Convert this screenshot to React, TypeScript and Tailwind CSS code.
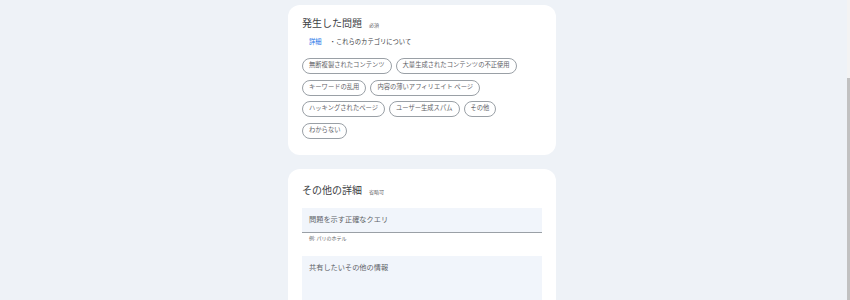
import React from "react";

const chipsRows: string[][] = [
  ["無断複製されたコンテンツ", "大量生成されたコンテンツの不正使用"],
  ["キーワードの乱用", "内容の薄いアフィリエイト ページ"],
  ["ハッキングされたページ", "ユーザー生成スパム", "その他"],
  ["わからない"],
];

export default function App() {
  return (
    <div
      className="relative w-[850px] h-[300px] overflow-hidden bg-[#eef2f7]"
      style={{ fontFamily: '"Roboto", "Noto Sans CJK JP", sans-serif' }}
    >
      <div className="w-[844px] flex flex-col items-center pt-[5px] gap-[14px]">
        <div className="w-[268px] h-[150px] bg-white rounded-[12px] px-[14px] pt-[11px]">
          <div className="flex items-baseline gap-[7px] h-[15px]">
            <span className="text-[10px] text-[#3c4043] leading-[15px]">発生した問題</span>
            <span className="text-[5px] text-[#5f6368]">必須</span>
          </div>
          <div className="flex items-center mt-[6px] pl-[7px] h-[11px] text-[6.3px]">
            <span className="text-[#1a73e8]">詳細</span>
            <span className="ml-[8px] text-[#3c4043]">・これらのカテゴリについて</span>
          </div>
          <div className="mt-[10px] flex flex-col gap-[5.5px]">
            {chipsRows.map((row, i) => (
              <div key={i} className="flex gap-[4px]">
                {row.map((c) => (
                  <span
                    key={c}
                    className="h-[16px] px-[6px] flex items-center rounded-full border border-[#9aa0a6] text-[6.3px] text-[#5f6368] whitespace-nowrap"
                  >
                    {c}
                  </span>
                ))}
              </div>
            ))}
          </div>
        </div>
        <div className="w-[268px] h-[200px] bg-white rounded-[12px] px-[14px] pt-[14px]">
          <div className="flex items-baseline gap-[7px] h-[15px]">
            <span className="text-[10px] text-[#3c4043] leading-[15px]">その他の詳細</span>
            <span className="text-[5px] text-[#5f6368]">省略可</span>
          </div>
          <div className="mt-[10px] h-[25px] bg-[#f1f5fb] border-b border-[#9aa0a6] flex items-center px-[7px] text-[7.2px] text-[#5f6368]">
            問題を示す正確なクエリ
          </div>
          <div className="pl-[7px] mt-[1px] text-[5px] text-[#5f6368] leading-[8px]">例: パリのホテル</div>
          <div className="mt-[14px] h-[60px] bg-[#f1f5fb] px-[7px] pt-[7px] text-[7.2px] text-[#5f6368]">
            共有したいその他の情報
          </div>
        </div>
      </div>
      <div className="absolute right-0 top-0 w-[3px] h-[300px] bg-[#f3f3f3]">
        <div className="mt-[78px] h-[222px] bg-[#c1c1c1]" />
      </div>
    </div>
  );
}
